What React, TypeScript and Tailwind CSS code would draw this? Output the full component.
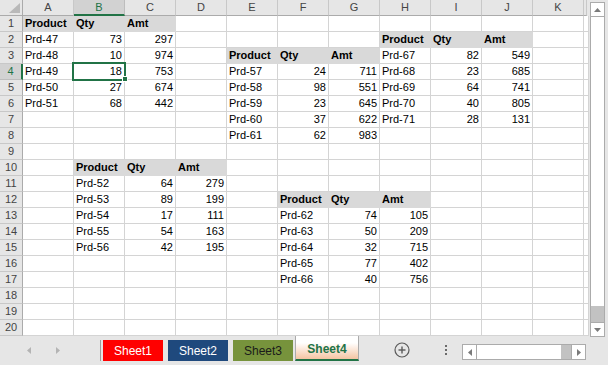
import React from "react";

type Cell = { t: string | number; fill?: boolean; num?: boolean };

const tables = [
  { r: 1, c: 1, data: [["Prd-47", 73, 297], ["Prd-48", 10, 974], ["Prd-49", 18, 753], ["Prd-50", 27, 674], ["Prd-51", 68, 442]] },
  { r: 3, c: 5, data: [["Prd-57", 24, 711], ["Prd-58", 98, 551], ["Prd-59", 23, 645], ["Prd-60", 37, 622], ["Prd-61", 62, 983]] },
  { r: 2, c: 8, data: [["Prd-67", 82, 549], ["Prd-68", 23, 685], ["Prd-69", 64, 741], ["Prd-70", 40, 805], ["Prd-71", 28, 131]] },
  { r: 10, c: 2, data: [["Prd-52", 64, 279], ["Prd-53", 89, 199], ["Prd-54", 17, 111], ["Prd-55", 54, 163], ["Prd-56", 42, 195]] },
  { r: 12, c: 6, data: [["Prd-62", 74, 105], ["Prd-63", 50, 209], ["Prd-64", 32, 715], ["Prd-65", 77, 402], ["Prd-66", 40, 756]] },
];

const cells: Record<string, Cell> = {};
tables.forEach((tb) => {
  ["Product", "Qty", "Amt"].forEach((h, i) => {
    cells[`${tb.r},${tb.c + i}`] = { t: h, fill: true };
  });
  tb.data.forEach((row, ri) => {
    row.forEach((v, ci) => {
      cells[`${tb.r + 1 + ri},${tb.c + ci}`] = { t: v, num: typeof v === "number" };
    });
  });
});

const letters = ["", "A", "B", "C", "D", "E", "F", "G", "H", "I", "J", "K", ""];

function GridCell({ r, c }: { r: number; c: number }) {
  if (r === 0 && c === 0) {
    return (
      <div className="relative bg-[#e6e6e6] border-r border-b border-[#ababab]">
        <svg className="absolute left-[9px] top-[3px]" width="11" height="10" viewBox="0 0 11 10">
          <polygon points="11,0 11,10 0,10" fill="#b9b9b9" />
        </svg>
      </div>
    );
  }
  if (r === 0) {
    const sel = c === 2;
    return (
      <div
        className={
          "text-center text-[11px] leading-[15px] border-r " +
          (sel
            ? "bg-[#d2d2d2] text-[#217346] border-b-2 border-b-[#217346] border-r-[#bdbdbd]"
            : "bg-[#e6e6e6] text-[#444] border-b border-b-[#ababab] border-r-[#c8c8c8]")
        }
      >
        {letters[c]}
      </div>
    );
  }
  if (c === 0) {
    const sel = r === 4;
    return (
      <div
        className={
          "text-center text-[11px] leading-[15px] border-b " +
          (sel
            ? "bg-[#d2d2d2] text-[#217346] border-r-2 border-r-[#217346] border-b-[#bdbdbd]"
            : "bg-[#e6e6e6] text-[#444] border-r border-r-[#ababab] border-b-[#c8c8c8]")
        }
      >
        {r}
      </div>
    );
  }
  const cell = cells[`${r},${c}`];
  if (cell && cell.fill) {
    return (
      <div className="bg-[#d9d9d9] border-r border-b border-[#d9d9d9] px-[2px] text-[11px] leading-[15px] font-bold text-black whitespace-nowrap overflow-hidden">
        {cell.t}
      </div>
    );
  }
  return (
    <div
      className={
        "bg-white border-r border-b border-[#d4d4d4] px-[2px] text-[11px] leading-[15px] text-black whitespace-nowrap overflow-hidden " +
        (cell && cell.num ? "text-right" : "text-left")
      }
    >
      {cell ? cell.t : ""}
    </div>
  );
}

function Tab({ label, cls }: { label: string; cls: string }) {
  return (
    <div className={"mt-[4px] h-[21px] w-[60px] flex items-center justify-center text-[12px] " + cls}>{label}</div>
  );
}

export default function App() {
  const rows = Array.from({ length: 21 }, (_, i) => i);
  const cols = Array.from({ length: 13 }, (_, i) => i);
  return (
    <div className="w-[608px] h-[365px] overflow-hidden bg-[#e6e6e6] font-['Liberation_Sans',Arial,sans-serif] flex flex-col">
      <div className="flex h-[336px]">
        <div className="relative grid grid-cols-[23px_repeat(11,51px)_3px] grid-rows-[repeat(21,16px)] w-[587px]">
          {rows.map((r) => cols.map((c) => <GridCell key={`${r}-${c}`} r={r} c={c} />))}
          <div className="absolute left-[72px] top-[62px] w-[54px] h-[19px] border-2 border-[#217346]" />
          <div className="absolute left-[122px] top-[76px] w-[6px] h-[6px] bg-[#217346] border border-white" />
        </div>
        <div className="flex-1 pl-[3px] pt-[2px]">
          <div className="w-[15px] h-[335px] border border-[#ababab] bg-white flex flex-col">
            <div className="h-[14px] border-b border-[#ababab] flex items-center justify-center">
              <svg width="7" height="4" viewBox="0 0 7 4"><polygon points="3.5,0 7,4 0,4" fill="#7a7a7a" /></svg>
            </div>
            <div className="flex-1" />
            <div className="h-[16px] bg-[#c2c2c2]" />
            <div className="h-[14px] border-t border-[#ababab] flex items-center justify-center">
              <svg width="7" height="4" viewBox="0 0 7 4"><polygon points="0,0 7,0 3.5,4" fill="#7a7a7a" /></svg>
            </div>
          </div>
        </div>
      </div>
      <div className="flex items-start h-[29px]">
        <div className="w-[100px] h-[29px] relative">
          <svg className="absolute left-[27px] top-[11px]" width="4" height="7" viewBox="0 0 4 7"><polygon points="4,0 4,7 0,3.5" fill="#b4b4b4" /></svg>
          <svg className="absolute left-[56px] top-[11px]" width="4" height="7" viewBox="0 0 4 7"><polygon points="0,0 0,7 4,3.5" fill="#b4b4b4" /></svg>
        </div>
        <div className="w-px h-[21px] mt-[4px] bg-[#9e9e9e]" />
        <div className="ml-[2px]"><Tab label="Sheet1" cls="bg-[#ff0000] text-white" /></div>
        <div className="ml-[5px]"><Tab label="Sheet2" cls="bg-[#1f497d] text-white" /></div>
        <div className="ml-[5px]"><Tab label="Sheet3" cls="bg-[#77933c] text-[#1a1a1a]" /></div>
        <div className="ml-[2px] w-[64px] h-[25px] border-x border-[#ababab] border-b-2 border-b-[#217346] bg-gradient-to-b from-white from-30% to-[#f4c4a2] flex items-center justify-center pt-[2px] text-[12px] font-bold text-[#217346]">
          Sheet4
        </div>
        <div className="ml-[35px] mt-[6px] w-[16px] h-[16px]">
          <svg width="16" height="16" viewBox="0 0 16 16">
            <circle cx="8" cy="8" r="7" fill="none" stroke="#5a5a5a" strokeWidth="1.2" />
            <line x1="4.5" y1="8" x2="11.5" y2="8" stroke="#5a5a5a" strokeWidth="1.4" />
            <line x1="8" y1="4.5" x2="8" y2="11.5" stroke="#5a5a5a" strokeWidth="1.4" />
          </svg>
        </div>
        <div className="ml-[35px] mt-[9px] w-[3px] flex flex-col gap-[2px]">
          <div className="w-[2px] h-[2px] bg-[#6a6a6a]" />
          <div className="w-[2px] h-[2px] bg-[#6a6a6a]" />
          <div className="w-[2px] h-[2px] bg-[#6a6a6a]" />
        </div>
        <div className="ml-[14px] mt-[8px] w-[124px] h-[16px] border border-[#ababab] bg-white flex">
          <div className="w-[14px] border-r border-[#ababab] flex items-center justify-center">
            <svg width="4" height="7" viewBox="0 0 4 7"><polygon points="4,0 4,7 0,3.5" fill="#7a7a7a" /></svg>
          </div>
          <div className="flex-1" />
          <div className="w-[10px] bg-[#c2c2c2]" />
          <div className="w-[14px] border-l border-[#ababab] flex items-center justify-center">
            <svg width="4" height="7" viewBox="0 0 4 7"><polygon points="0,0 0,7 4,3.5" fill="#7a7a7a" /></svg>
          </div>
        </div>
      </div>
    </div>
  );
}
